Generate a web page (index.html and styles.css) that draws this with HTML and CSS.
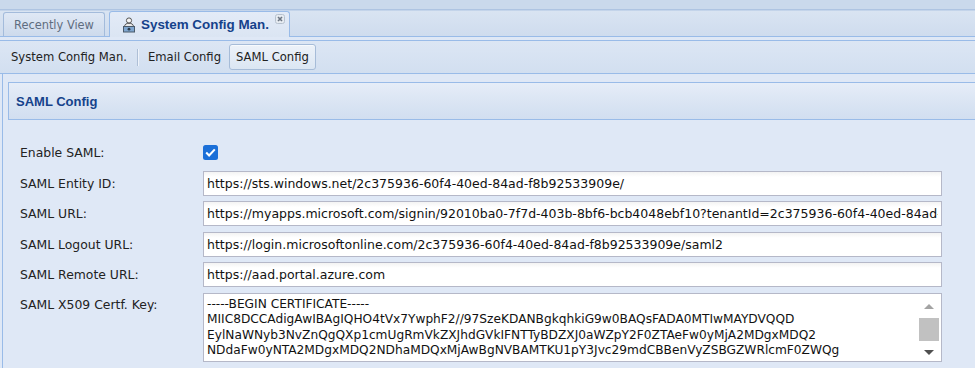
FILE: index.html
```html
<!DOCTYPE html>
<html>
<head>
<meta charset="utf-8">
<title>SAML Config</title>
<link rel="stylesheet" href="styles.css">
</head>
<body>
<div class="tabbar">
  <div class="tab tab-inactive">Recently View</div>
  <div class="tab tab-active">
    <svg class="tab-icon" width="14" height="16" viewBox="0 0 14 16">
      <circle cx="7" cy="3.5" r="2.6" fill="#f4f4f4" stroke="#555" stroke-width="1"/>
      <path d="M2.5 10 C2.5 7 4.5 6.3 7 6.3 C9.5 6.3 11.5 7 11.5 10 Z" fill="#e8e8e8" stroke="#555" stroke-width="1"/>
      <rect x="1.5" y="9.5" width="11" height="5.5" fill="#7fa6cf" stroke="#4a5a6a" stroke-width="1"/>
      <circle cx="7" cy="12.2" r="1.4" fill="#2d3d4d"/>
    </svg>
    <span class="tab-title">System Config Man.</span>
    <span class="tab-close">
      <svg width="10" height="10" viewBox="0 0 10 10">
        <rect x="0.5" y="0.5" width="9" height="9" rx="2" fill="#e6ebf1" stroke="#b7c2cf"/>
        <path d="M3 3 L7 7 M7 3 L3 7" stroke="#6c7683" stroke-width="1.6"/>
      </svg>
    </span>
  </div>
</div>
<div class="toolbar">
  <span class="tb-item">System Config Man.</span>
  <span class="tb-sep"></span>
  <span class="tb-item">Email Config</span>
  <span class="tb-btn">SAML Config</span>
</div>
<div class="main">
  <div class="panel-header">SAML Config</div>
  <div class="form">
    <div class="row row-check">
      <label class="lbl">Enable SAML:</label>
      <span class="check">
        <svg width="15" height="15" viewBox="0 0 15 15">
          <rect x="0" y="0" width="15" height="15" rx="2.5" fill="#1b6fd8"/>
          <path d="M3.2 7.6 L6.1 10.4 L11.8 4.4" fill="none" stroke="#fff" stroke-width="2.1"/>
        </svg>
      </span>
    </div>
    <div class="row">
      <label class="lbl">SAML Entity ID:</label>
      <input class="field" type="text" value="https://sts.windows.net/2c375936-60f4-40ed-84ad-f8b92533909e/">
    </div>
    <div class="row">
      <label class="lbl">SAML URL:</label>
      <input class="field" type="text" value="https://myapps.microsoft.com/signin/92010ba0-7f7d-403b-8bf6-bcb4048ebf10?tenantId=2c375936-60f4-40ed-84ad-f8b92533909e">
    </div>
    <div class="row">
      <label class="lbl">SAML Logout URL:</label>
      <input class="field" type="text" value="https://login.microsoftonline.com/2c375936-60f4-40ed-84ad-f8b92533909e/saml2">
    </div>
    <div class="row">
      <label class="lbl">SAML Remote URL:</label>
      <input class="field" type="text" value="https://aad.portal.azure.com">
    </div>
    <div class="row row-area">
      <label class="lbl">SAML X509 Certf. Key:</label>
      <div class="area">
        <div class="area-text">
          <div>-----BEGIN CERTIFICATE-----</div>
          <div>MIIC8DCCAdigAwIBAgIQHO4tVx7YwphF2//97SzeKDANBgkqhkiG9w0BAQsFADA0MTIwMAYDVQQD</div>
          <div>EylNaWNyb3NvZnQgQXp1cmUgRmVkZXJhdGVkIFNTTyBDZXJ0aWZpY2F0ZTAeFw0yMjA2MDgxMDQ2</div>
          <div>NDdaFw0yNTA2MDgxMDQ2NDhaMDQxMjAwBgNVBAMTKU1pY3Jvc29mdCBBenVyZSBGZWRlcmF0ZWQg</div>
        </div>
        <div class="sbar">
          <span class="arrow-up"></span>
          <span class="thumb"></span>
          <span class="arrow-down"></span>
        </div>
      </div>
    </div>
  </div>
</div>
</body>
</html>
```
FILE: styles.css
```css
html, body {
  margin: 0;
  padding: 0;
}
body {
  width: 975px;
  height: 368px;
  overflow: hidden;
  background: #dfe8f6;
  font-family: "DejaVu Sans", Verdana, sans-serif;
  font-size: 12.5px;
  color: #222;
}

/* top tab strip */
.tabbar {
  height: 24px;
  padding: 12px 0 0 3px;
  display: flex;
  align-items: flex-end;
  gap: 4px;
  background: linear-gradient(#cad9ec 0, #cad9ec 9px, #aec4e2 9px, #aec4e2 10px, #d9e4f2 11px, #cfdcee 36px);
  border-bottom: 1px solid #99bbe8;
}
.tab {
  box-sizing: border-box;
  height: 25px;
  border: 1px solid #a3bbdb;
  border-bottom: none;
  border-radius: 3px 3px 0 0;
  display: flex;
  align-items: center;
  font-size: 11.4px;
  margin-bottom: -1px;
}
.tab-inactive {
  width: 102px;
  padding-left: 10px;
  color: #5f6d80;
  background: linear-gradient(#dfe8f5, #cddaec);
  height: 24px;
  margin-bottom: 0;
}
.tab-active {
  width: 181px;
  height: 26px;
  padding-left: 12px;
  border-color: #99bbe8;
  background: linear-gradient(#e3ebf7, #dbe5f3);
}
.tab-icon {
  flex: none;
  margin-right: 5px;
}
.tab-title {
  font-family: "Liberation Sans", Arial, sans-serif;
  font-weight: bold;
  font-size: 13.4px;
  color: #15428b;
}
.tab-close {
  align-self: flex-start;
  margin: 2px 0 0 6px;
  line-height: 0;
}

/* toolbar */
.toolbar {
  margin-top: 3px;
  height: 32px;
  border-top: 1px solid #99bbe8;
  border-bottom: 1px solid #99bbe8;
  background: linear-gradient(#dce6f4, #d2dff0);
  display: flex;
  align-items: center;
  padding-left: 11px;
  font-size: 11.6px;
  color: #222;
}
.tb-sep {
  width: 1px;
  height: 17px;
  background: #aebfd6;
  border-right: 1px solid #eef3fa;
  margin: 0 9px 0 10px;
}
.tb-btn {
  margin-left: 8px;
  box-sizing: border-box;
  height: 26px;
  padding: 0 6px;
  display: flex;
  align-items: center;
  border: 1px solid #a6bcd8;
  border-radius: 3px;
  background: linear-gradient(#edf2f9, #dbe6f3);
  box-shadow: inset 0 1px 0 #f7fafd;
}

/* main area */
.main {
  margin-left: 2px;
  border-left: 1px solid #99bbe8;
  padding: 8px 0 0 5px;
  height: 300px;
}
.panel-header {
  box-sizing: border-box;
  height: 38px;
  margin-right: -10px;
  border: 1px solid #99bbe8;
  background: linear-gradient(#e6edf8 0, #dce6f4 45%, #d1def0 100%);
  padding-left: 7px;
  display: flex;
  align-items: center;
  font-family: "Liberation Sans", Arial, sans-serif;
  font-weight: bold;
  font-size: 13px;
  color: #15428b;
}
.form {
  padding: 19px 0 0 12px;
  display: flex;
  flex-direction: column;
  gap: 5.5px;
}
.row {
  display: grid;
  grid-template-columns: 183px 739px;
  align-items: center;
  height: 25px;
}
.row-check {
  height: 26px;
}
.row-area {
  height: 69px;
  align-items: start;
}
.row-area .lbl {
  padding-top: 4px;
}
.lbl {
  font-size: 12.4px;
  color: #222;
}
.check {
  line-height: 0;
}
.field {
  box-sizing: border-box;
  width: 739px;
  height: 25px;
  margin: 0;
  border: 1px solid #b5b8c8;
  padding: 0 3px;
  background: linear-gradient(#f3f3f3, #fff 5px);
  font-family: "DejaVu Sans", Verdana, sans-serif;
  font-size: 12.5px;
  color: #111;
  outline: none;
}
.area {
  box-sizing: border-box;
  width: 739px;
  height: 69px;
  border: 1px solid #b5b8c8;
  background: #fff;
  display: flex;
}
.area-text {
  flex: 1;
  overflow: hidden;
  padding: 3.5px 3px 0;
  font-size: 12.2px;
  line-height: 15.3px;
  color: #111;
  white-space: nowrap;
}
.sbar {
  width: 21px;
  margin-right: 2px;
  display: flex;
  flex-direction: column;
  align-items: center;
  padding-top: 10px;
}
.arrow-up {
  width: 0;
  height: 0;
  border-left: 5px solid transparent;
  border-right: 5px solid transparent;
  border-bottom: 5px solid #a3a3a3;
}
.thumb {
  width: 20px;
  height: 23px;
  background: #c1c1c1;
  margin-top: 9px;
}
.arrow-down {
  width: 0;
  height: 0;
  margin-top: 9px;
  border-left: 5px solid transparent;
  border-right: 5px solid transparent;
  border-top: 5px solid #505050;
}
```
